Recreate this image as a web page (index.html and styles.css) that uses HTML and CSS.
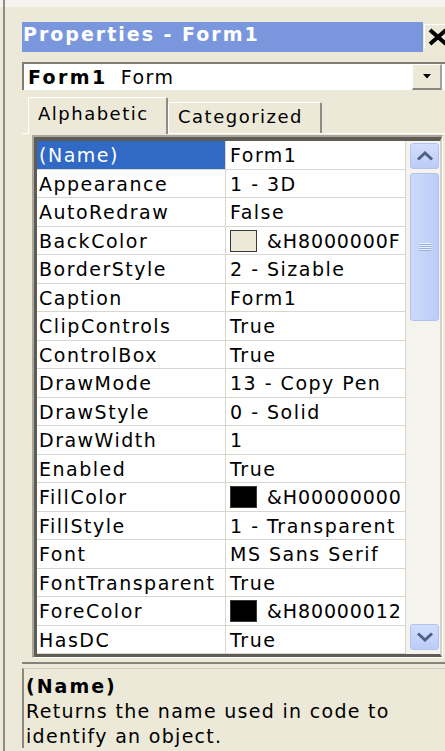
FILE: index.html
```html
<!DOCTYPE html>
<html lang="en">
<head>
<meta charset="utf-8">
<title>Properties - Form1</title>
<link rel="stylesheet" href="styles.css">
</head>
<body>
<div class="window">
  <div class="titlebar">
    <div class="title">Properties - Form1</div>
    <div class="close">
      <svg width="22" height="18" viewBox="0 0 22 18"><path d="M3 2 L19 16 M19 2 L3 16" stroke="#000" stroke-width="4" fill="none"/></svg>
    </div>
  </div>
  <div class="combo">
    <div class="combo-text"><b>Form1</b>Form</div>
    <div class="combo-btn">
      <svg width="8" height="5" viewBox="0 0 8 5"><path d="M0 0 H8 L4 4.5 Z" fill="#000"/></svg>
    </div>
  </div>
  <div class="tabs">
    <div class="tab active">Alphabetic</div>
    <div class="tab inactive">Categorized</div>
  </div>
  <div class="page">
    <div class="gridbox">
      <div class="grid">
        <div class="props">
          <div class="row sel"><div class="name">(Name)</div><div class="value"><span>Form1</span></div></div>
          <div class="row"><div class="name">Appearance</div><div class="value"><span>1 - 3D</span></div></div>
          <div class="row"><div class="name">AutoRedraw</div><div class="value"><span>False</span></div></div>
          <div class="row"><div class="name">BackColor</div><div class="value"><i class="swatch beige"></i><span class="hex">&amp;H8000000F</span></div></div>
          <div class="row"><div class="name">BorderStyle</div><div class="value"><span>2 - Sizable</span></div></div>
          <div class="row"><div class="name">Caption</div><div class="value"><span>Form1</span></div></div>
          <div class="row"><div class="name">ClipControls</div><div class="value"><span>True</span></div></div>
          <div class="row"><div class="name">ControlBox</div><div class="value"><span>True</span></div></div>
          <div class="row"><div class="name">DrawMode</div><div class="value"><span>13 - Copy Pen</span></div></div>
          <div class="row"><div class="name">DrawStyle</div><div class="value"><span>0 - Solid</span></div></div>
          <div class="row"><div class="name">DrawWidth</div><div class="value"><span>1</span></div></div>
          <div class="row"><div class="name">Enabled</div><div class="value"><span>True</span></div></div>
          <div class="row"><div class="name">FillColor</div><div class="value"><i class="swatch black"></i><span class="hex">&amp;H00000000</span></div></div>
          <div class="row"><div class="name">FillStyle</div><div class="value"><span>1 - Transparent</span></div></div>
          <div class="row"><div class="name">Font</div><div class="value"><span>MS Sans Serif</span></div></div>
          <div class="row"><div class="name">FontTransparent</div><div class="value"><span>True</span></div></div>
          <div class="row"><div class="name">ForeColor</div><div class="value"><i class="swatch black"></i><span class="hex">&amp;H80000012</span></div></div>
          <div class="row"><div class="name">HasDC</div><div class="value"><span>True</span></div></div>
        </div>
        <div class="scroll">
          <div class="sbtn">
            <svg width="20" height="10" viewBox="0 0 20 10"><path d="M3 8.5 L10 2 L17 8.5" stroke="#4D6185" stroke-width="3" fill="none"/></svg>
          </div>
          <div class="thumb">
            <svg width="12" height="9" viewBox="0 0 12 9"><path d="M0 0.5 H12 M0 2.5 H12 M0 4.5 H12 M0 6.5 H12" stroke="#EEF3FF" stroke-width="1"/><path d="M0 1.5 H12 M0 3.5 H12 M0 5.5 H12 M0 7.5 H12" stroke="#98AEE0" stroke-width="1"/></svg>
          </div>
          <div class="track"></div>
          <div class="sbtn">
            <svg width="20" height="10" viewBox="0 0 20 10"><path d="M3 1.5 L10 8 L17 1.5" stroke="#4D6185" stroke-width="3" fill="none"/></svg>
          </div>
        </div>
      </div>
    </div>
  </div>
  <div class="desc">
    <div class="desc-title">(Name)</div>
    <div class="desc-text">Returns the name used in code to<br>identify an object.</div>
  </div>
</div>
</body>
</html>
```
FILE: styles.css
```css
html, body {
  margin: 0;
  padding: 0;
}
body {
  width: 445px;
  height: 751px;
  overflow: hidden;
  background: linear-gradient(#F4F3EE 0, #F4F3EE 7px, #ECE9D8 7px);
  font-family: "DejaVu Sans", Verdana, sans-serif;
  font-size: 19px;
  letter-spacing: 1.5px;
  color: #000;
}
.window {
  margin-left: 3px;
  border-left: 2px solid #8E8C84;
  height: 751px;
  width: 460px;
  box-sizing: border-box;
  padding: 22px 0 0 17px;
}
.titlebar {
  display: flex;
  height: 30px;
  width: 430px;
}
.title {
  width: 401px;
  background: #7A97DE;
  color: #fff;
  font-weight: bold;
  letter-spacing: 2px;
  line-height: 24px;
  padding-left: 1px;
  box-sizing: border-box;
}
.close {
  margin: 2px 0 0 1px;
  height: 24px;
  width: 28px;
  box-sizing: border-box;
  background: #ECE9D8;
  border-top: 1px solid #fff;
  border-left: 1px solid #fff;
  display: flex;
  align-items: center;
  padding-left: 2px;
}
.combo {
  margin-top: 10px;
  width: 426px;
  height: 28px;
  box-sizing: border-box;
  border-top: 2px solid #7F7D74;
  border-left: 2px solid #7F7D74;
  background: #fff;
  display: flex;
  align-items: center;
  justify-content: space-between;
}
.combo-text {
  padding-left: 4px;
  line-height: 26px;
  white-space: nowrap;
}
.combo-text b {
  letter-spacing: 2.4px;
  margin-right: 13px;
}
.combo-btn {
  width: 30px;
  height: 26px;
  margin-right: 6px;
  align-self: flex-start;
  box-sizing: border-box;
  background: #ECE9D8;
  border-top: 1px solid #fff;
  border-left: 1px solid #fff;
  border-right: 2px solid #A4A297;
  border-bottom: 2px solid #8A887F;
  display: flex;
  align-items: center;
  justify-content: center;
}
.tabs {
  margin-top: 7px;
  height: 36px;
  border-bottom: 1px solid #fff;
  display: flex;
  align-items: flex-end;
  padding-left: 6px;
  font-size: 18px;
  line-height: 22px;
}
.tab {
  box-sizing: border-box;
  background: #ECE9D8;
  border-top: 1px solid #fff;
  border-left: 1px solid #fff;
  border-right: 2px solid #8D8B83;
  border-radius: 2px 2px 0 0;
  white-space: nowrap;
}
.tab.active {
  width: 140px;
  height: 37px;
  margin-bottom: -1px;
  padding: 5px 0 0 9px;
}
.tab.inactive {
  width: 154px;
  height: 31px;
  padding: 3px 0 0 9px;
}
.page {
  border-bottom: 2px solid #85837A;
  padding-bottom: 4px;
}
.gridbox {
  margin: 1px 0 0 10px;
  width: 411px;
  box-sizing: border-box;
  border-style: solid;
  border-width: 2px 1px 1px 2px;
  border-color: #A9A79C #fff #fff #A9A79C;
}
.grid {
  display: flex;
  border-style: solid;
  border-width: 4px 2px 3px 3px;
  border-color: #5E5C55 #D4D0C8 #5E5C55 #5E5C55;
  background: #fff;
}
.props {
  width: 369px;
}
.row {
  display: flex;
  height: 28.5px;
  box-sizing: border-box;
  border-bottom: 1px solid #D9D6CE;
}
.name {
  width: 189px;
  flex: none;
  box-sizing: border-box;
  border-right: 1px solid #D9D6CE;
  padding: 2px 0 0 2px;
  line-height: 25px;
  white-space: nowrap;
  overflow: hidden;
}
.row.sel .name {
  background: #316AC5;
  color: #fff;
}
.value {
  width: 180px;
  flex: none;
  box-sizing: border-box;
  border-right: 1px solid #D9D6CE;
  padding: 2px 0 0 4px;
  line-height: 25px;
  display: flex;
  align-items: flex-start;
  white-space: nowrap;
  overflow: hidden;
}
.hex {
  letter-spacing: 0.9px;
}
.swatch {
  flex: none;
  width: 27px;
  height: 22px;
  margin: 1px 10px 0 0;
  box-sizing: border-box;
  border: 1.5px solid #3A3A3A;
}
.swatch.beige { background: #ECE9D8; }
.swatch.black { background: #000; }
.scroll {
  width: 34px;
  box-sizing: border-box;
  padding: 2px 1px 4px 4px;
  display: flex;
  flex-direction: column;
  background: #F4F3EE;
}
.sbtn {
  height: 26px;
  flex: none;
  box-sizing: border-box;
  border: 1px solid #B1C4F1;
  border-radius: 3px;
  background: linear-gradient(#D3DEFC, #BACCF7);
  display: flex;
  align-items: center;
  justify-content: center;
}
.thumb {
  margin-top: 4px;
  height: 148px;
  flex: none;
  box-sizing: border-box;
  border: 1px solid #AFC3F1;
  border-radius: 3px;
  background: linear-gradient(90deg, #CCD9FB, #BCCDF8);
  display: flex;
  align-items: center;
  justify-content: center;
}
.track {
  flex: 1;
}
.desc {
  margin-top: 4px;
  border-left: 2px solid #8B897F;
  border-top: 1px solid #CFCCC2;
  padding: 5px 0 0 2px;
  line-height: 25px;
  letter-spacing: 1.3px;
  white-space: nowrap;
}
.desc-title {
  font-weight: bold;
  letter-spacing: 2px;
}
.desc-text {
  line-height: 24.5px;
}
```
